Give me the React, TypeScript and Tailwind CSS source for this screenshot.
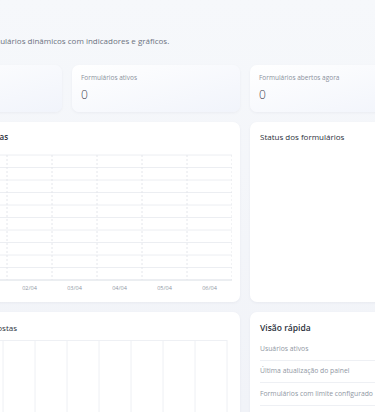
const days = ["31/03", "01/04", "02/04", "03/04", "04/04", "05/04", "06/04"];

const stats = [
  { label: "Total de formulários", value: "0" },
  { label: "Formulários ativos", value: "0" },
  { label: "Formulários abertos agora", value: "0" },
];

const quickRows = [
  { label: "Usuários ativos", value: "0" },
  { label: "Última atualização do painel", value: "—" },
  { label: "Formulários com limite configurado", value: "0" },
];

const ResponsesChart = () => {
  const left = 13;
  const band = 45;
  const rows = Array.from({ length: 11 }, (_, i) => 5 + i * 12.5);

  return (
    <svg width="328" height="146" viewBox="0 0 328 146" className="block">
      {rows.map((y) => (
        <line key={y} x1={left} x2={left + band * 7} y1={y} y2={y} stroke="#eceef2" strokeWidth="1" />
      ))}
      {Array.from({ length: 8 }, (_, i) => left + i * band).map((x) => (
        <line key={x} x1={x} x2={x} y1={5} y2={130} stroke="#e4e6eb" strokeWidth="1" strokeDasharray="2 2" />
      ))}
      <line x1={left} x2={left + band * 7} y1={130} y2={130} stroke="#e2e5ea" strokeWidth="1" />
      {days.map((d, i) => (
        <text key={d} x={left + band * i + band / 2} y={140} textAnchor="middle" fontSize="5.5" fill="#8f96a3" fontFamily="'Open Sans', sans-serif">
          {d}
        </text>
      ))}
    </svg>
  );
};

const FormsChart = () => {
  const cols = Array.from({ length: 11 }, (_, i) => 3 + i * 32);
  return (
    <svg width="328" height="80" viewBox="0 0 328 80" className="block">
      <line x1={0} x2={323} y1={0.5} y2={0.5} stroke="#eef0f4" strokeWidth="1" />
      {cols.map((x) => (
        <line key={x} x1={x} x2={x} y1={0} y2={80} stroke="#eef0f4" strokeWidth="1" />
      ))}
    </svg>
  );
};

export default function App() {
  return (
    <div className="w-[375px] h-[412px] overflow-hidden bg-gradient-to-b from-[#f6f8fb] to-[#f1f3f8] font-['Open_Sans',sans-serif]">
      <div className="ml-[-106px] w-[524px]">
        {/* header */}
        <div className="pt-[10px] h-[65px]">
          <h1 className="text-[13px] leading-[18px] font-semibold text-[#1f2937]">Painel</h1>
          <p className="mt-[7px] text-[8px] leading-[12px] text-[#6b7280] whitespace-nowrap">
            Acompanhe sempre os formulários dinâmicos com indicadores e gráficos.
          </p>
        </div>

        {/* stat cards */}
        <div className="grid grid-cols-[168px_168px_168px] gap-[10px]">
          {stats.map((s) => (
            <div
              key={s.label}
              className="h-[47px] rounded-[7px] bg-gradient-to-br from-white to-[#f1f4fb] shadow-[0_1px_3px_rgba(30,41,80,0.05)] px-[9px] pt-[8px]"
            >
              <div className="text-[6.5px] leading-[10px] text-[#8a909c]">{s.label}</div>
              <div className="mt-[4px] text-[12px] leading-[16px] font-light text-[#3f4451]">{s.value}</div>
            </div>
          ))}
        </div>

        {/* charts row */}
        <div className="mt-[10px] grid grid-cols-[346px_168px] gap-[10px]">
          <div className="h-[180px] rounded-[7px] bg-white shadow-[0_1px_3px_rgba(30,41,80,0.05)] pl-[10px] pr-[8px] pt-[9px]">
            <div className="text-[8px] leading-[12px] font-semibold text-[#2b303b]">Respostas nos últimos dias</div>
            <div className="mt-[7px]">
              <ResponsesChart />
            </div>
          </div>
          <div className="h-[180px] rounded-[7px] bg-white shadow-[0_1px_3px_rgba(30,41,80,0.05)] px-[10px] pt-[9px]">
            <div className="text-[8px] leading-[12px] font-medium text-[#2b303b]">Status dos formulários</div>
          </div>
        </div>

        {/* bottom row */}
        <div className="mt-[10px] grid grid-cols-[346px_168px] gap-[10px]">
          <div className="h-[110px] rounded-[7px] bg-white shadow-[0_1px_3px_rgba(30,41,80,0.05)] pl-[10px] pr-[8px] pt-[10px]">
            <div className="text-[8px] leading-[12px] font-medium text-[#2b303b]">Top formulários por respostas</div>
            <div className="mt-[6px]">
              <FormsChart />
            </div>
          </div>
          <div className="h-[110px] rounded-[7px] bg-white shadow-[0_1px_3px_rgba(30,41,80,0.05)] px-[10px] pt-[10px]">
            <div className="text-[8.5px] leading-[12px] font-semibold text-[#2b303b]">Visão rápida</div>
            <div className="mt-[4px]">
              {quickRows.map((r) => (
                <div key={r.label} className="h-[22.5px] flex items-center justify-between border-b border-[#eef0f4]">
                  <span className="text-[6.8px] text-[#9097a3]">{r.label}</span>
                  <span className="text-[7px] text-[#3f4451]">{r.value}</span>
                </div>
              ))}
            </div>
          </div>
        </div>
      </div>
    </div>
  );
}
